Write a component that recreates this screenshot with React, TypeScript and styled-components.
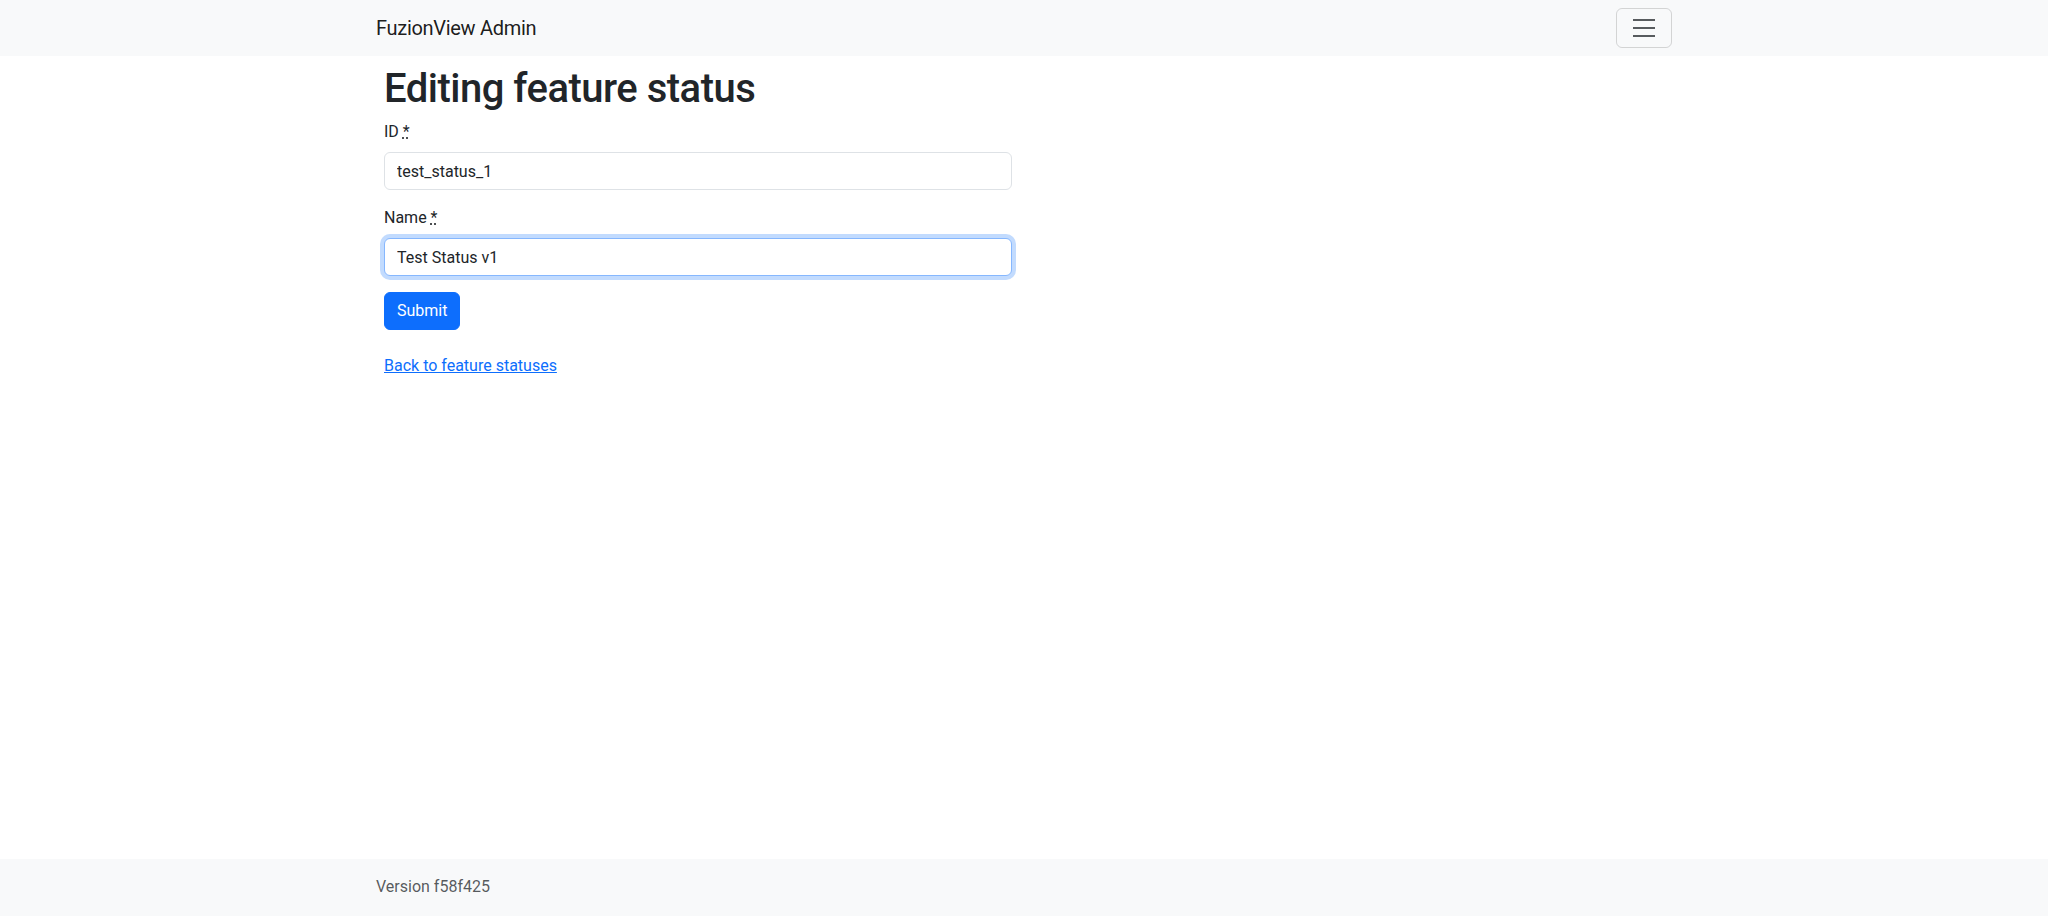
import React from "react";
import styled, { createGlobalStyle } from "styled-components";

const Global = createGlobalStyle`
  html, body { margin: 0; padding: 0; }
  body {
    font-family: Roboto, "Liberation Sans", sans-serif;
    font-size: 16px;
    line-height: 1.5;
    color: #212529;
    background: #fff;
  }
  * { box-sizing: border-box; }
`;

const Page = styled.div`
  min-height: 916px;
  display: flex;
  flex-direction: column;
`;

const NavBar = styled.nav`
  background: #f8f9fa;
  padding: 8px 0;
`;

const Container = styled.div`
  max-width: 1320px;
  margin: 0 auto;
  padding: 0 12px;
  display: flex;
  align-items: center;
  justify-content: space-between;
`;

const Brand = styled.a`
  font-size: 20px;
  line-height: 30px;
  padding: 5px 0;
  letter-spacing: -0.3px;
  color: rgba(0, 0, 0, 0.9);
  text-decoration: none;
`;

const Toggler = styled.button`
  width: 56px;
  height: 40px;
  padding: 4px 12px;
  border: 1px solid rgba(0, 0, 0, 0.15);
  border-radius: 6px;
  background: transparent;
  display: flex;
  align-items: center;
  justify-content: center;
`;

const Main = styled.main`
  flex: 1;
  width: 100%;
  max-width: 1320px;
  margin: 0 auto;
  padding: 8px 20px;
`;

const Title = styled.h1`
  font-size: 40px;
  font-weight: 500;
  line-height: 1.2;
  letter-spacing: -0.5px;
  padding-top: 1px;
  margin: 0 0 7px;
`;

const Form = styled.form`
  width: 628px;
`;

const Field = styled.div`
  margin-bottom: 16px;
`;

const Label = styled.label`
  display: block;
  margin-bottom: 8px;
`;

const Req = styled.abbr`
  text-decoration: underline dotted;
  cursor: help;
`;

const Input = styled.input<{ $focused?: boolean }>`
  display: block;
  width: 100%;
  height: 38px;
  padding: 6px 12px;
  font: inherit;
  font-size: 16px;
  line-height: 1.5;
  color: #212529;
  background: #fff;
  border: 1px solid ${(p) => (p.$focused ? "#86b7fe" : "#dee2e6")};
  border-radius: 6px;
  outline: none;
  box-shadow: ${(p) => (p.$focused ? "0 0 0 4px rgba(13,110,253,0.25)" : "none")};
  caret-color: #212529;
`;

const Submit = styled.button`
  font: inherit;
  font-size: 16px;
  line-height: 24px;
  padding: 6px 12px;
  color: #fff;
  background: #0d6efd;
  border: 1px solid #0d6efd;
  border-radius: 6px;
`;

const BackLink = styled.a`
  display: inline-block;
  margin-top: 24px;
  color: #0d6efd;
  text-decoration: underline;
`;

const Footer = styled.footer`
  background: #f8f9fa;
  padding: 16px 0;
  height: 57px;
`;

const FooterText = styled.span`
  color: rgba(33, 37, 41, 0.75);
`;

export default function App() {
  const ref = React.useRef<HTMLInputElement>(null);
  React.useEffect(() => {
    const el = ref.current;
    if (el) {
      el.focus();
      const n = el.value.length;
      el.setSelectionRange(n, n);
    }
  }, []);
  return (
    <Page>
      <Global />
      <NavBar>
        <Container>
          <Brand href="#">FuzionView Admin</Brand>
          <Toggler type="button" aria-label="Toggle navigation">
            <svg width="30" height="30" viewBox="0 0 30 30">
              <path
                stroke="rgba(33,37,41,0.75)"
                strokeLinecap="butt"
                strokeMiterlimit="10"
                strokeWidth="2"
                d="M4 7h22M4 15h22M4 23h22"
              />
            </svg>
          </Toggler>
        </Container>
      </NavBar>
      <Main>
        <Title>Editing feature status</Title>
        <Form onSubmit={(e) => e.preventDefault()}>
          <Field>
            <Label htmlFor="id">
              ID <Req title="required">*</Req>
            </Label>
            <Input id="id" defaultValue="test_status_1" />
          </Field>
          <Field>
            <Label htmlFor="name">
              Name <Req title="required">*</Req>
            </Label>
            <Input id="name" ref={ref} autoFocus $focused defaultValue="Test Status v1" />
          </Field>
          <Submit type="submit">Submit</Submit>
        </Form>
        <BackLink href="#">Back to feature statuses</BackLink>
      </Main>
      <Footer>
        <Container>
          <FooterText>Version f58f425</FooterText>
        </Container>
      </Footer>
    </Page>
  );
}
